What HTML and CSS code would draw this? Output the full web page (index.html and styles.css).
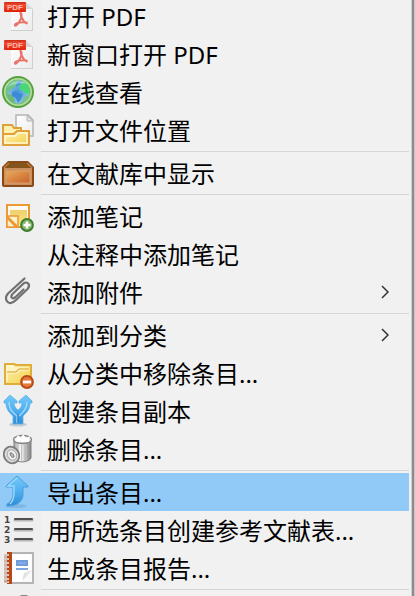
FILE: index.html
```html
<!DOCTYPE html>
<html lang="zh-CN">
<head>
<meta charset="utf-8">
<meta name="viewport" content="width=device-width, initial-scale=1">
<title>Menu</title>
<link rel="stylesheet" href="styles.css">
</head>
<body>
<svg class="defs" width="0" height="0" aria-hidden="true">
  <defs>
    <linearGradient id="red" x1="0" y1="0" x2="0" y2="1"><stop offset="0" stop-color="#c92a12"/><stop offset=".3" stop-color="#f04a30"/><stop offset="1" stop-color="#e02008"/></linearGradient>
    <linearGradient id="paper" x1="0" y1="0" x2="1" y2="1"><stop offset="0" stop-color="#ffffff"/><stop offset="1" stop-color="#ececec"/></linearGradient>
    <linearGradient id="folder" x1="0" y1="0" x2="1" y2="1"><stop offset="0" stop-color="#fff3b8"/><stop offset="1" stop-color="#f3cf45"/></linearGradient>
    <radialGradient id="sea"><stop offset="0" stop-color="#4a96dc"/><stop offset="1" stop-color="#8cc6e4"/></radialGradient>
    <linearGradient id="box" x1="0" y1="0" x2="1" y2="1"><stop offset="0" stop-color="#e8aa58"/><stop offset="1" stop-color="#c9622c"/></linearGradient>
    <linearGradient id="note" x1="0" y1="0" x2="0" y2="1"><stop offset="0" stop-color="#f0d070"/><stop offset="1" stop-color="#f6e67c"/></linearGradient>
    <linearGradient id="blue" x1="0" y1="0" x2="0" y2="1"><stop offset="0" stop-color="#74c8f8"/><stop offset=".5" stop-color="#52b0f0"/><stop offset="1" stop-color="#2c8ed8"/></linearGradient>
    <linearGradient id="metal" x1="0" y1="0" x2="1" y2="0"><stop offset="0" stop-color="#a0a0a0"/><stop offset=".35" stop-color="#f8f8f8"/><stop offset=".65" stop-color="#cccccc"/><stop offset="1" stop-color="#808080"/></linearGradient>
    <symbol id="pdf" viewBox="0 0 32 32">
      <path d="M9 2.500H24L31 9V31H9Z" fill="#cfcfcf"/>
      <path d="M9 2.500H24L30 9V30H9Z" fill="url(#paper)"/>
      <path d="M24 2.500V9H30Z" fill="#d5d5d5"/>
      <path d="M18.500 13C20 13 20 17 18 20.500C16 24 14 26.500 13 25.500C12 23.500 18 21.500 24.500 22.500C26 24 22.500 24.500 19 16Z" fill="none" stroke="#ea746a" stroke-width="2"/>
      <rect x="2" y="2" width="22" height="10" rx="1" fill="url(#red)"/>
      <text x="13" y="10" text-anchor="middle" class="pdf-tag">PDF</text>
    </symbol>
  </defs>
</svg>

<nav class="menu">
  <ul class="list">
    <li><button class="item" type="button"><svg class="icon" aria-hidden="true"><use href="#pdf"/></svg><span class="label">打开 PDF</span></button></li>
    <li><button class="item" type="button"><svg class="icon" aria-hidden="true"><use href="#pdf"/></svg><span class="label">新窗口打开 PDF</span></button></li>
    <li><button class="item" type="button">
      <svg class="icon" viewBox="0 0 32 32" aria-hidden="true">
        <circle cx="16" cy="16" r="15" fill="#b4dc98" stroke="#58a244" stroke-width="2"/>
        <circle cx="16" cy="16" r="12" fill="url(#sea)" stroke="#74b878" stroke-width="1"/>
        <path d="M5 12C7 7 11 4 16 4L18 7L14 9L12 12L9 13L7 16L5 17Z" fill="#6cc48a"/>
        <path d="M5 17L9 19L12 22L13 27C8 26 5 22 5 17Z" fill="#6cb874"/>
        <path d="M18 8L23 6C27 9 28 13 28 17L24 18L21 15L17 13Z" fill="#48d678"/>
        <path d="M23 20L27 19C26 23 23 26 19 27Z" fill="#7cc090"/>
        <path d="M10 16L14 15L17 17L21 18L19 23L16 27L14 22L10 20Z" fill="#3f8ad4"/>
        <path d="M15 5L20 5L18 9L14 11Z" fill="#4a9ada"/>
        <path d="M6 11C9 5 18 2 25 8C18 6 10 9 6 11Z" fill="#fff" opacity=".35"/>
      </svg><span class="label">在线查看</span></button></li>
    <li><button class="item" type="button">
      <svg class="icon" viewBox="0 0 32 32" aria-hidden="true">
        <path d="M14 1H26L31 6V22H14Z" fill="url(#paper)" stroke="#b5b5b5" stroke-width="1.500"/>
        <path d="M25 1V7H31Z" fill="#dedede" stroke="#b5b5b5"/>
        <path d="M1 30V11H10L12 14H19V20" fill="#fff0b0" stroke="#dca23a" stroke-width="2"/>
        <path d="M1 31V20H12L15 17H27V31Z" fill="url(#folder)" stroke="#e0a03a" stroke-width="2" stroke-linejoin="round"/>
        <path d="M3 29V22H13L16 19H25V29Z" fill="none" stroke="#fff8d6" stroke-width="1.500"/>
      </svg><span class="label">打开文件位置</span></button></li>
    <li class="separator" role="separator"></li>
    <li><button class="item" type="button">
      <svg class="icon" viewBox="0 0 32 32" aria-hidden="true">
        <path d="M6 4H26L32 10V28Q32 30 30 30H2Q0 30 0 28V10Z" fill="#8a4a18"/>
        <path d="M8 6H24L28 11H4Z" fill="#85541a"/>
        <path d="M2 11L7 6M30 11L25 6" stroke="#b87c3c" stroke-width="1.500"/>
        <rect x="2" y="11" width="28" height="17" fill="#c98f5c"/>
        <rect x="4" y="14" width="24" height="12" fill="url(#box)" stroke="#dda06a"/>
      </svg><span class="label">在文献库中显示</span></button></li>
    <li class="separator" role="separator"></li>
    <li><button class="item" type="button">
      <svg class="icon" viewBox="0 0 32 32" aria-hidden="true">
        <rect x="5" y="5" width="22" height="22" fill="#fffaf0" stroke="#eb9836" stroke-width="2"/>
        <rect x="8" y="10" width="17" height="15" fill="url(#note)"/>
        <path d="M5 16H16V27H5Z" fill="#fff0c8" stroke="#eb9836" stroke-width="1.500"/>
        <path d="M5 17L15 27" stroke="#eb9836" stroke-width="3"/>
        <circle cx="25" cy="25" r="6" fill="#80b468" stroke="#3f7c2e" stroke-width="1.800"/>
        <path d="M25 21.500V28.500M21.500 25H28.500" stroke="#fff" stroke-width="2.600"/>
      </svg><span class="label">添加笔记</span></button></li>
    <li><button class="item" type="button"><span class="icon"></span><span class="label">从注释中添加笔记</span></button></li>
    <li><button class="item" type="button">
      <svg class="icon" viewBox="0 0 32 32" aria-hidden="true">
        <path d="M22.500 2.500L6 17.500C2.500 21.500 4 26 7.500 27C10 27.500 12 26 14 24L25.500 13C29 9 25.500 4.500 21.500 7.500L10.500 18C8 21 10 23.500 13 21.500L21.500 13.500" fill="none" stroke="#707070" stroke-width="2.200" stroke-linecap="round" stroke-linejoin="round"/>
      </svg><span class="label">添加附件</span>
      <svg class="chevron" viewBox="0 0 8 14" aria-hidden="true"><path d="M1 1L7 7L1 13"/></svg></button></li>
    <li class="separator" role="separator"></li>
    <li><button class="item" type="button"><span class="icon"></span><span class="label">添加到分类</span>
      <svg class="chevron" viewBox="0 0 8 14" aria-hidden="true"><path d="M1 1L7 7L1 13"/></svg></button></li>
    <li><button class="item" type="button">
      <svg class="icon" viewBox="0 0 32 32" aria-hidden="true">
        <path d="M3 27V7H12L14 8H29V27Z" fill="url(#folder)" stroke="#dfad38" stroke-width="2"/>
        <path d="M5 25V9H11L13 11H27V13H18L15 16H5" fill="#fff4c0" stroke="#fffbe5" stroke-width="1"/>
        <path d="M5 15H14L17 12H27" fill="none" stroke="#e5ba4c" stroke-width="1.500"/>
        <circle cx="25" cy="25" r="6" fill="#e77a3a" stroke="#b94a18" stroke-width="1.800"/>
        <path d="M21 25H29" stroke="#fff" stroke-width="2.800"/>
      </svg><span class="label">从分类中移除条目...</span></button></li>
    <li><button class="item" type="button">
      <svg class="icon" viewBox="0 0 32 32" aria-hidden="true">
        <ellipse cx="16" cy="29.500" rx="9" ry="2" fill="#c5cbd0"/>
        <path d="M8 0L15 6V8H12C12 11 14 14 16 15C18 14 20 11 20 8H17V6L24 0L30 6V8H28C28 15 24 18 21 21V29H11V21C8 18 4 15 4 8H2V6Z" fill="url(#blue)" stroke="#5cb2ee" stroke-width=".8"/>
        <path d="M7 7C7 14 10 17 15 21V28M25 7C25 13 22 17 17 21" fill="none" stroke="#a5dcfc" stroke-width="1.300"/>
        <path d="M16 19V28" stroke="#2f86cc" stroke-width="1.300"/>
      </svg><span class="label">创建条目副本</span></button></li>
    <li><button class="item" type="button">
      <svg class="icon" viewBox="0 0 32 32" aria-hidden="true">
        <path d="M12 6V26C15 30 27 30 29 25V6Z" fill="url(#metal)" stroke="#808080"/>
        <path d="M16 11V27M19.500 12V28M23 12V28M26 11V27" stroke="#888" stroke-width=".8" opacity=".5"/>
        <ellipse cx="20.500" cy="6.500" rx="9" ry="4" fill="#e2e2e2" stroke="#858585" stroke-width="1.300"/>
        <path d="M13 7L16 2L19 5L21 1L24 5L28 3L27 9H15Z" fill="#fff"/>
        <ellipse cx="9.500" cy="22" rx="7.500" ry="8.500" transform="rotate(-30 9.500 22)" fill="#dcdcdc" stroke="#7c7c7c" stroke-width="1.800"/>
        <ellipse cx="10" cy="22" rx="4.500" ry="5.500" transform="rotate(-30 10 22)" fill="#eee" stroke="#aaa"/>
        <path d="M8 20C9 19 12 21 12 24C10 25 8 23 8 20Z" fill="#bbb" stroke="#777"/>
      </svg><span class="label">删除条目...</span></button></li>
    <li class="separator" role="separator"></li>
    <li><button class="item selected" type="button">
      <svg class="icon" viewBox="0 0 32 32" aria-hidden="true">
        <ellipse cx="14" cy="30" rx="11" ry="2" fill="#78acd8" opacity=".6"/>
        <path d="M15 0L26 10V11H21V18C21 25 16 30 5 30V28C9 26 11 22 11 17V11H4V10Z" fill="url(#blue)" stroke="#4a9edc"/>
        <path d="M15 2L6 10H12V17C12 22 10 26 8 28" fill="none" stroke="#9bdafc" stroke-width="1.400"/>
      </svg><span class="label">导出条目...</span></button></li>
    <li><button class="item" type="button">
      <svg class="icon" viewBox="0 0 32 32" aria-hidden="true">
        <g class="digits"><text x="2" y="9">1</text><text x="2" y="19">2</text><text x="2" y="29">3</text></g>
        <path d="M13 6H30M13 16H30M13 26H30" stroke="#b5b5b5" stroke-width="3" stroke-linecap="round"/>
        <path d="M13 5H30M13 15H30M13 25H30" stroke="#505050" stroke-width="2" stroke-linecap="round"/>
      </svg><span class="label">用所选条目创建参考文献表...</span></button></li>
    <li><button class="item" type="button">
      <svg class="icon" viewBox="0 0 32 32" aria-hidden="true">
        <path d="M8 1H31V31H8Z" fill="#fafafa" stroke="#b5b5b5" stroke-width="2"/>
        <path d="M10 3H29V18L20 29H10Z" fill="#fff"/>
        <path d="M20 29L22 21L30 18Z" fill="#e2e2e2"/>
        <path d="M5 0H10V32H5Z" fill="#b84818"/>
        <path d="M2 3H7M2 7H7M2 11H7M2 15H7M2 19H7M2 23H7M2 27H7M2 30H7" stroke="#d6c6bb" stroke-width="1.800"/>
        <path d="M2 5H6M2 9H6M2 13H6M2 17H6M2 21H6M2 25H6M2 29H6" stroke="#a85a3a" stroke-width=".8"/>
        <rect x="14" y="8" width="12" height="6" fill="#6f9cdd"/>
        <path d="M16 11H24" stroke="#9cbcec"/>
        <path d="M14 17H26" stroke="#7ca5e2" stroke-width="2"/>
      </svg><span class="label">生成条目报告...</span></button></li>
    <li class="separator" role="separator"></li>
    <li class="item">
      <svg class="icon" viewBox="0 0 32 32" aria-hidden="true"><circle cx="22" cy="7" r="7" fill="#999" stroke="#777"/></svg></li>
  </ul>
</nav>
</body>
</html>
```
FILE: styles.css
```css
* {
  box-sizing: border-box;
}

body {
  margin: 0;
  height: 100vh;
  overflow: hidden;
  background: #c6c6c6;
  font-family: "Noto Sans", "Noto Sans CJK SC", sans-serif;
  font-size: 24px;
  color: #000;
}

.defs {
  position: absolute;
}

.menu {
  height: 100%;
  margin-right: 1px;
  padding-right: 2px;
  overflow: hidden;
  border-right: 2px solid #8c8c8c;
  background: linear-gradient(to right, #efefef 41px, #f1f1f1 41px);
  box-shadow: inset -1px 0 #cecece;
}

/* The panel is scrolled slightly past its first row. */
.list {
  margin: -3px 1px 0 0;
  padding: 0;
  list-style: none;
}

.item {
  display: flex;
  align-items: center;
  width: 100%;
  height: 38px;
  padding: 0 20px 0 2px;
  border: 0;
  background: none;
  color: inherit;
  font: inherit;
  text-align: left;
}

.selected {
  background: #91c9f7;
}

.icon {
  flex: none;
  width: 32px;
  height: 32px;
  margin-right: 13px;
}

.label {
  flex: 1;
  padding-top: 2px;
  line-height: 36px;
  white-space: nowrap;
}

.chevron {
  flex: none;
  width: 8px;
  height: 14px;
  fill: none;
  stroke: #333;
  stroke-width: 1.5;
}

.separator {
  height: 1px;
  margin: 2px 0 2px 41px;
  background: #d5d5d5;
}

.pdf-tag {
  fill: #ffb4a8;
  font: bold 8px "Liberation Sans", sans-serif;
}

.digits {
  fill: #444;
  font: bold 9px "DejaVu Sans", sans-serif;
}
```
